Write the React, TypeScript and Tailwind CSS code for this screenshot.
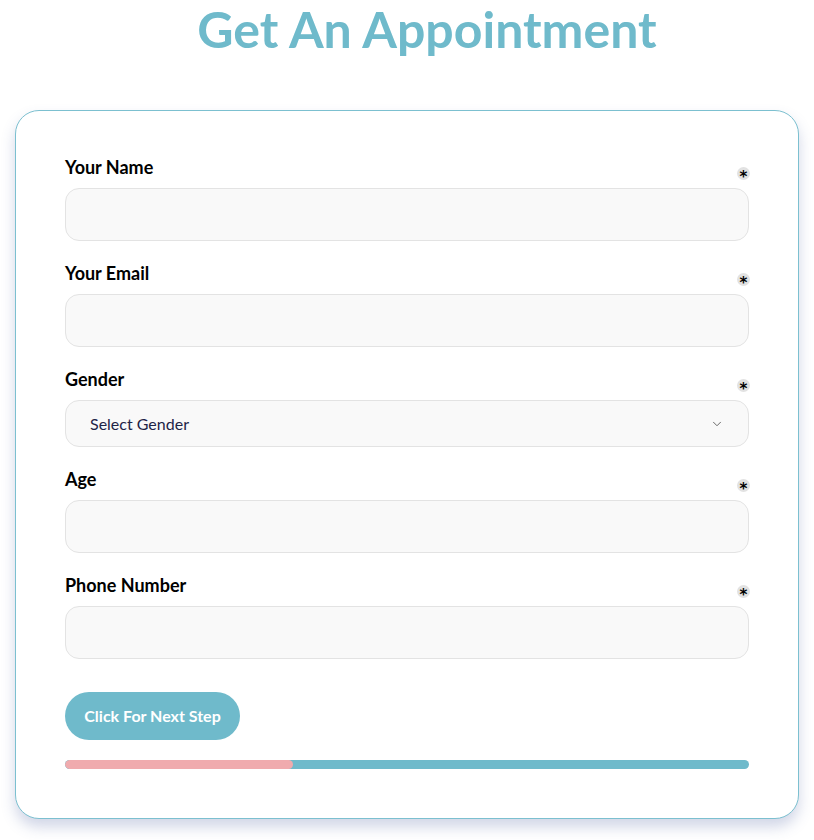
import { ChevronDown } from "lucide-react"

interface Field {
  id: string
  label: string
  type: "text" | "select"
}

const fields: Field[] = [
  { id: "name", label: "Your Name", type: "text" },
  { id: "email", label: "Your Email", type: "text" },
  { id: "gender", label: "Gender", type: "select" },
  { id: "age", label: "Age", type: "text" },
  { id: "phone", label: "Phone Number", type: "text" },
]

function Required() {
  return (
    <span className="flex h-[13px] w-[13px] items-center justify-center rounded-full bg-[#e2e2e2] font-['DejaVu_Sans',sans-serif] text-[15px] font-bold leading-none text-black">
      <span className="mt-[8px]">*</span>
    </span>
  )
}

export default function App() {
  return (
    <div className="min-h-[840px] bg-white font-['Lato',sans-serif]">
      <h1 className="pl-[40px] text-center text-[50px] font-bold leading-[58px] text-[#6fbacb]">
        Get An Appointment
      </h1>

      <div className="mx-[15px] mt-[52px] rounded-[24px] border border-[#7cc0d0] bg-white px-[49px] pb-[49px] pt-[44px] shadow-[0_8px_14px_rgba(70,90,160,0.25)]">
        <form className="flex flex-col">
          {fields.map((field) => (
            <div key={field.id} className="mb-[20px]">
              <div className="flex items-end justify-between">
                <label className="text-[18px] font-bold leading-[24px] text-black">{field.label}</label>
                <span className="mb-[-1px] mr-[-1px]"><Required /></span>
              </div>
              {field.type === "select" ? (
                <div className="mt-[9px] flex h-[47px] items-center justify-between rounded-[14px] border border-[#e3e3e3] bg-[#f9f9f9] pl-[24px] pr-[24px]">
                  <span className="text-[16px] text-[#1e2447]">Select Gender</span>
                  <ChevronDown className="h-[14px] w-[14px] text-[#555]" strokeWidth={1.5} />
                </div>
              ) : (
                <div className="mt-[9px] h-[53px] rounded-[14px] border border-[#e3e3e3] bg-[#f9f9f9]" />
              )}
            </div>
          ))}

          <button
            type="button"
            className="mt-[13px] h-[48px] w-[175px] rounded-full bg-[#6fbacb] text-[16px] font-bold text-white"
          >
            Click For Next Step
          </button>

          <div className="mt-[20px] flex h-[9px] overflow-hidden rounded-full bg-[#6fbacb]">
            <div className="h-full w-[33.3%] rounded-full bg-[#f0abae]" />
          </div>
        </form>
      </div>
    </div>
  )
}
